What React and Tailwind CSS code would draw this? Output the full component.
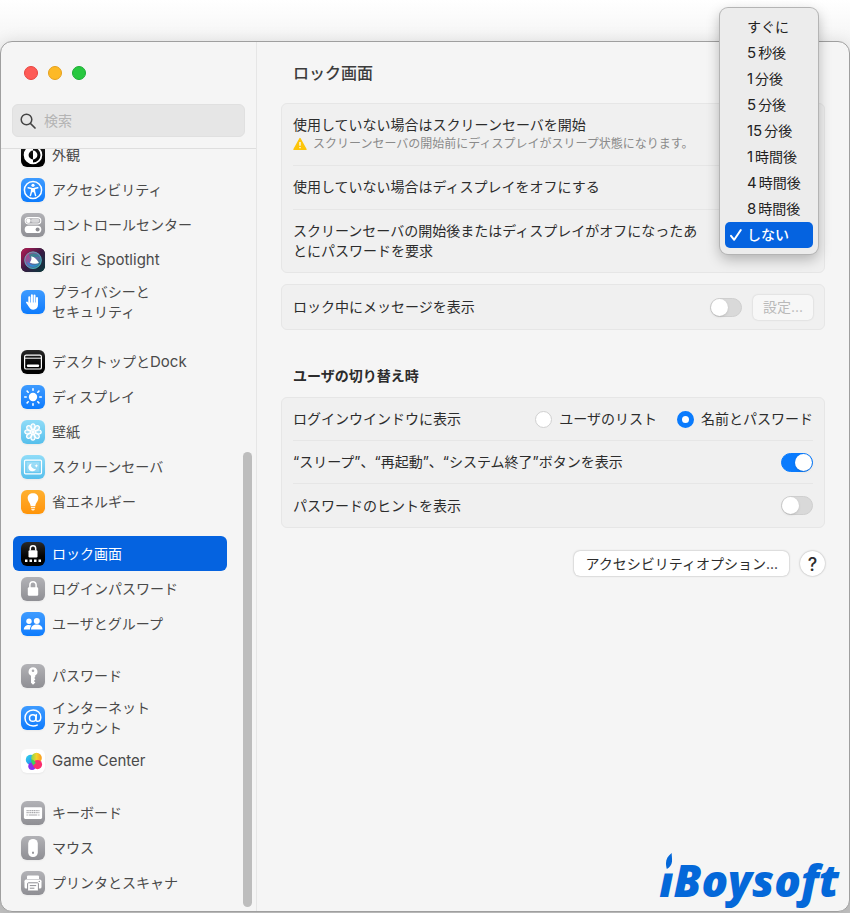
import React, { useState } from "react";

const BLUE = "bg-linear-to-b from-[#3d9bff] to-[#0a7bfd]";
const GRAY = "bg-linear-to-b from-[#b2b2b6] to-[#8f8f94]";
const BLACK = "bg-linear-to-b from-[#2a2a2a] to-[#000000]";
const CYAN = "bg-linear-to-b from-[#8fdcf8] to-[#55bfec]";

const spokes = [0, 45, 90, 135, 180, 225, 270, 315];

const icons = {
  appearance: (
    <>
      <circle cx="12" cy="12" r="8.4" fill="none" stroke="#fff" strokeWidth="1.8" />
      <path d="M12 3.6a8.4 8.4 0 0 0 0 16.8v-4a4.4 4.4 0 0 1 0-8.8z" fill="#fff" />
      <path d="M12 7.6a4.4 4.4 0 0 1 0 8.8z" fill="#fff" />
    </>
  ),
  accessibility: (
    <>
      <circle cx="12" cy="12" r="8.6" fill="none" stroke="#fff" strokeWidth="1.5" />
      <circle cx="12" cy="7.3" r="1.6" fill="#fff" />
      <path d="M7.2 9.8l3.4.7v2.7l-1.2 4.4M16.8 9.8l-3.4.7v2.7l1.2 4.4" fill="none" stroke="#fff" strokeWidth="1.5" strokeLinecap="round" strokeLinejoin="round" />
      <path d="M10.2 10h3.6v4.2h-3.6z" fill="#fff" />
    </>
  ),
  control: (
    <>
      <rect x="4.2" y="4.6" width="15.6" height="6.4" rx="3.2" fill="none" stroke="#fff" strokeWidth="1.1" />
      <rect x="10" y="5.8" width="8.4" height="4" rx="2" fill="#fff" opacity=".55" />
      <circle cx="7.4" cy="7.8" r="2.2" fill="#fff" />
      <rect x="3.7" y="12.8" width="16.6" height="7.2" rx="3.6" fill="#fff" />
      <circle cx="16.6" cy="16.4" r="2" fill="#8e8e93" />
    </>
  ),
  siri: (
    <>
      <defs>
        <linearGradient id="siri-bg" x1="0" y1="0" x2="1" y2="1">
          <stop offset="0" stopColor="#c01a55" />
          <stop offset=".5" stopColor="#3a1a44" />
          <stop offset="1" stopColor="#043c3c" />
        </linearGradient>
        <linearGradient id="siri-orb" x1="0" y1="0" x2="1" y2="1">
          <stop offset="0" stopColor="#f0377c" />
          <stop offset=".45" stopColor="#8a7fd0" />
          <stop offset="1" stopColor="#14b8b0" />
        </linearGradient>
      </defs>
      <rect width="24" height="24" fill="url(#siri-bg)" />
      <circle cx="12" cy="12.2" r="8.6" fill="url(#siri-orb)" opacity=".7" />
      <circle cx="12" cy="12.2" r="8.3" fill="none" stroke="#52c9c8" strokeWidth=".9" opacity=".8" />
      <path d="M8 6.500c4-2.500 8-1.500 10.500 2.500-4-1-6 0-6.500 3-2-1-3.500-3-4-5.500z" fill="#1f8f8c" opacity=".7" />
      <path d="M6 13.500c3 4 8 5 12 2-2 4-10 5.500-12-2z" fill="#2a8fe0" opacity=".85" />
      <path d="M10.200 8.200c4 1 6.300 4 7.800 6.800-3 1-6.500.8-9.300-.6 1.800-1.600 2-4 1.500-6.200z" fill="#fff" />
    </>
  ),
  privacy: (
    <g fill="none" stroke="#fff" strokeLinecap="round">
      <path d="M8.3 7.2v6M10.9 5.3v8M13.5 5.6v8M16 8v6" strokeWidth="2" />
      <path d="M6 12.5l2.6 3.5" strokeWidth="1.9" />
      <path d="M7.4 12.4H17v2.2c0 3.200-1.800 5.200-4.800 5.200-2.400 0-3.600-1.300-4.800-4z" fill="#fff" stroke="none" />
    </g>
  ),
  dock: (
    <>
      <rect x="3.6" y="5.2" width="16.8" height="13.8" rx="1.6" fill="none" stroke="#fff" strokeWidth="1.2" />
      <path d="M4 8.2h16" stroke="#fff" strokeWidth="1" />
      <path d="M7 15.8h10" stroke="#fff" strokeWidth="2.4" strokeLinecap="round" />
    </>
  ),
  display: (
    <>
      <circle cx="12" cy="12" r="4.2" fill="#fff" />
      {spokes.map((a) => (
        <path key={a} d="M12 3.7v1.5" transform={`rotate(${a} 12 12)`} stroke="#fff" strokeWidth="1.6" strokeLinecap="round" />
      ))}
    </>
  ),
  wallpaper: (
    <>
      {spokes.map((a) => (
        <ellipse key={a} cx="12" cy="6.7" rx="2.1" ry="2.9" transform={`rotate(${a} 12 12)`} fill="#fff" fillOpacity=".35" stroke="#fff" strokeWidth="1.3" />
      ))}
      <circle cx="12" cy="12" r="1.9" fill="#fff" />
    </>
  ),
  saver: (
    <>
      <rect x="3.5" y="5.2" width="17" height="13.6" rx="1" fill="none" stroke="#fff" strokeWidth="1.2" />
      <rect x="5.6" y="7.2" width="12.8" height="9.6" fill="#fff" opacity=".25" />
      <path d="M10.600 8.400a4 4 0 1 0 4.500 5.300 3.700 3.700 0 0 1-4.500-5.300z" fill="#fff" />
      <path d="M15.300 9l.6 1.300 1.300.5-1.300.6-.6 1.300-.5-1.300-1.300-.6 1.300-.5z" fill="#fff" />
    </>
  ),
  energy: (
    <>
      <path d="M12 3.300c-3.200 0-5.300 2-5.300 4.800 0 3.400 2.600 4.600 3 8.100h4.600c.4-3.500 3-4.700 3-8.100 0-2.800-2.100-4.800-5.300-4.800z" fill="#fff" />
      <path d="M9.900 17.100h4.200v1.100H9.900zM10.200 18.900h3.600c-.2 1-.9 1.600-1.800 1.600s-1.600-.6-1.800-1.600z" fill="#fff" opacity=".85" />
    </>
  ),
  lockscreen: (
    <>
      <path d="M9.300 8.600V6.400a2.700 2.700 0 0 1 5.400 0v2.200" fill="none" stroke="#fff" strokeWidth="1.500" />
      <rect x="7.500" y="8.300" width="9" height="7.200" rx="1.200" fill="#fff" />
      <path d="M4 17.500h2.500v2.500H4zM8.500 17.500H11v2.500H8.500zM13 17.500h2.500v2.500H13zM17.500 17.500H20v2.500h-2.500z" fill="#fff" />
    </>
  ),
  lock: (
    <>
      <path d="M8.900 11V7.800a3.100 3.100 0 0 1 6.200 0V11" fill="none" stroke="#fff" strokeWidth="1.500" />
      <rect x="6.800" y="10.300" width="10.400" height="8.400" rx="1.300" fill="#fff" />
    </>
  ),
  users: (
    <g fill="#fff">
      <circle cx="8" cy="9.300" r="2.700" />
      <circle cx="15.800" cy="9" r="3" />
      <path d="M2.800 17.600c0-3 2.200-4.700 5-4.700 1.100 0 2 .2 2.700.7-1 1-1.500 2.300-1.500 4z" />
      <path d="M10 17.600c0-3.200 2.400-5 5.700-5s5.800 1.800 5.800 5z" />
    </g>
  ),
  key: (
    <path
      fillRule="evenodd"
      d="M12 3.200a4.500 4.500 0 0 0-2 8.500v7.100l2 2 2.400-2.300-1.500-1.600 1.500-1.600-1.200-1.400 1-.9v-1.400A4.500 4.500 0 0 0 12 3.200zm0 2.300a1.300 1.300 0 1 1 0 2.600 1.300 1.300 0 0 1 0-2.600z"
      fill="#fff"
    />
  ),
  at: (
    <g fill="none" stroke="#fff" strokeWidth="1.500" strokeLinecap="round">
      <circle cx="11.800" cy="12" r="3.300" />
      <path d="M15.300 8.700l-.5 4.600c-.1 1.300.6 2 1.700 2 1.800 0 3.300-1.700 3.300-4.100 0-4.200-3.300-7.200-7.600-7.200-4.800 0-8.200 3.500-8.200 8.100 0 4.700 3.300 7.900 8.200 7.900 1.500 0 2.900-.3 4-.9" />
    </g>
  ),
  game: (
    <>
      <defs>
        <linearGradient id="gc-a" x1="0" y1="0" x2="1" y2="1">
          <stop offset="0" stopColor="#2fd8e8" />
          <stop offset=".6" stopColor="#2b9bf0" />
          <stop offset="1" stopColor="#6a4df0" />
        </linearGradient>
        <linearGradient id="gc-b" x1="0" y1="0" x2="1" y2="0">
          <stop offset="0" stopColor="#7ed957" />
          <stop offset=".5" stopColor="#f5d327" />
          <stop offset="1" stopColor="#fb9a1f" />
        </linearGradient>
      </defs>
      <circle cx="9.800" cy="10.800" r="5" fill="url(#gc-a)" />
      <circle cx="15.500" cy="9" r="5.300" fill="url(#gc-b)" />
      <circle cx="11" cy="17.200" r="3.700" fill="#8b2ff0" />
      <circle cx="16.500" cy="15.600" r="4.600" fill="#fb2d6d" />
      <path d="M10.200 10.500a5.300 5.300 0 0 1 4.600 3.700 4.700 4.700 0 0 0-2.300 2.600c-1.500-1.500-2.500-3.800-2.300-6.300z" fill="#3ecf5c" />
    </>
  ),
  keyboard: (
    <>
      <rect x="2.900" y="6.300" width="18.200" height="11.600" rx="1.400" fill="#fff" />
      <path d="M5.500 9.600h13M5.500 11.600h13" stroke="#a8a8ac" strokeWidth="1.200" strokeDasharray="1.300 .5" />
      <path d="M5.500 14h1.300M7.700 14h8.600M17.200 14h1.300" stroke="#a8a8ac" strokeWidth="1.200" />
    </>
  ),
  mouse: (
    <>
      <rect x="7.200" y="2.900" width="9.600" height="18.200" rx="4.600" fill="#fff" />
      <path d="M12 15.800v2" stroke="#8e8e93" strokeWidth="1.800" />
    </>
  ),
  printer: (
    <>
      <path d="M7 4.500h10a1 1 0 0 1 1 1V8H6V5.500a1 1 0 0 1 1-1z" fill="#fff" />
      <rect x="3.500" y="8.600" width="17" height="9" rx="1.600" fill="#fff" />
      <rect x="6.600" y="11.800" width="10.800" height="8.200" rx=".8" fill="#fff" stroke="#8e8e93" strokeWidth="1" />
      <path d="M8.800 14.600h6.400M8.800 17.200h4.600" stroke="#8e8e93" strokeWidth="1" />
      <circle cx="18.300" cy="10.400" r=".7" fill="#8e8e93" />
    </>
  ),
};

const sections = [
  [
    { icon: "appearance", tone: BLACK, label: "外観" },
    { icon: "accessibility", tone: BLUE, label: "アクセシビリティ" },
    { icon: "control", tone: GRAY, label: "コントロールセンター" },
    { icon: "siri", tone: BLACK, label: "Siri と Spotlight" },
    { icon: "privacy", tone: BLUE, label: "プライバシーと\nセキュリティ" },
  ],
  [
    { icon: "dock", tone: BLACK, label: "デスクトップとDock" },
    { icon: "display", tone: BLUE, label: "ディスプレイ" },
    { icon: "wallpaper", tone: CYAN, label: "壁紙" },
    { icon: "saver", tone: CYAN, label: "スクリーンセーバ" },
    { icon: "energy", tone: "bg-linear-to-b from-[#ffb02e] to-[#ff9406]", label: "省エネルギー" },
  ],
  [
    { icon: "lockscreen", tone: BLACK, label: "ロック画面" },
    { icon: "lock", tone: GRAY, label: "ログインパスワード" },
    { icon: "users", tone: BLUE, label: "ユーザとグループ" },
  ],
  [
    { icon: "key", tone: GRAY, label: "パスワード" },
    { icon: "at", tone: BLUE, label: "インターネット\nアカウント" },
    { icon: "game", tone: "bg-white", label: "Game Center" },
  ],
  [
    { icon: "keyboard", tone: GRAY, label: "キーボード" },
    { icon: "mouse", tone: GRAY, label: "マウス" },
    { icon: "printer", tone: GRAY, label: "プリンタとスキャナ" },
  ],
];

// Latin runs are set one step larger than the kana around them.
function MixedText({ text }) {
  return text.split(/([A-Za-z]+(?: [A-Za-z]+)*)/).map((part, i) =>
    i % 2 ? (
      <span key={i} className="text-[15px]">
        {part}
      </span>
    ) : (
      part
    ),
  );
}

function NavItem({ item, selected, onSelect }) {
  const tall = item.label.includes("\n");
  return (
    <li>
      <a
        href="#"
        onClick={(e) => {
          e.preventDefault();
          onSelect(item.label);
        }}
        aria-current={selected ? "page" : undefined}
        className={`flex items-center gap-[7px] rounded-md px-2 text-sm leading-5 whitespace-pre-line ${tall ? "h-[50px]" : "h-[35px]"} ${
          selected ? "bg-[#0563e0] text-white" : "text-[#4a4a4a]"
        }`}
      >
        <svg viewBox="0 0 24 24" aria-hidden="true" className={`size-6 shrink-0 rounded-md shadow-xs ${item.tone}`}>
          {icons[item.icon]}
        </svg>
        <span>
          <MixedText text={item.label} />
        </span>
      </a>
    </li>
  );
}

function Sidebar() {
  const [current, setCurrent] = useState("ロック画面");
  return (
    <aside className="flex w-64 shrink-0 flex-col border-r border-[#e6e6e6]">
      <div className="border-b border-[#dedede] px-[11px] pb-[11px]">
        <div className="flex h-[62px] items-center gap-2.5 px-3">
          <button aria-label="閉じる" className="size-3.5 rounded-full border border-[#e8443f] bg-[#fe5b56]" />
          <button aria-label="しまう" className="size-3.5 rounded-full border border-[#e5a01c] bg-[#fdb926]" />
          <button aria-label="拡大" className="size-3.5 rounded-full border border-[#1cac35] bg-[#28c840]" />
        </div>
        <div className="flex h-[33px] items-center gap-2 rounded-md border border-[#e0e0e0] bg-[#e6e6e6] px-[7px]">
          <svg viewBox="0 0 16 16" aria-hidden="true" className="size-4 shrink-0">
            <circle cx="6.500" cy="6.500" r="5.300" fill="none" stroke="#444" strokeWidth="1.500" />
            <path d="M10.500 10.500l4.500 4.500" stroke="#444" strokeWidth="1.700" strokeLinecap="round" />
          </svg>
          <input
            type="search"
            aria-label="検索"
            placeholder="検索"
            className="min-w-0 flex-1 bg-transparent text-sm outline-none placeholder:text-[#b4b4b4]"
          />
        </div>
      </div>
      <div className="flex flex-1 overflow-hidden">
        <nav aria-label="設定項目" className="-mt-3 flex flex-1 flex-col gap-[17px] pr-4 pb-2 pl-3">
          {sections.map((items, i) => (
            <ul key={i}>
              {items.map((item) => (
                <NavItem key={item.label} item={item} selected={item.label === current} onSelect={setCurrent} />
              ))}
            </ul>
          ))}
        </nav>
        <div className="flex w-[13px] flex-col justify-end pr-1 pb-1">
          <div className="h-3/5 rounded-full bg-[#bdbdbd]" />
        </div>
      </div>
    </aside>
  );
}

function Card({ children }) {
  return (
    <div className="divide-y divide-[#e6e6e6] rounded-md border border-[#e6e6e6] bg-[#f0f0f0] px-[11px]">{children}</div>
  );
}

function Switch({ id, on, ...rest }) {
  return (
    <input
      id={id}
      type="checkbox"
      role="switch"
      defaultChecked={on}
      className="h-[19px] w-8 shrink-0 appearance-none rounded-full border border-[#cfcfcf] bg-[#d9d9d9] before:block before:size-[17px] before:rounded-full before:bg-white before:shadow-sm checked:border-[#0a7bfd] checked:bg-[#0a7bfd] checked:before:ml-[13px]"
      {...rest}
    />
  );
}

function Radio({ label, on }) {
  return (
    <label className="flex items-center gap-[7px]">
      <input
        type="radio"
        name="login-window"
        defaultChecked={on}
        className="size-[17px] appearance-none rounded-full border border-[#d0d0d0] bg-white checked:border-[5px] checked:border-[#0a7bfd]"
      />
      {label}
    </label>
  );
}

const delays = ["すぐに", "5秒後", "1分後", "5分後", "15分後", "1時間後", "4時間後", "8時間後", "しない"];

function DelayMenu() {
  const [value, setValue] = useState("しない");
  return (
    <div className="relative h-7 w-[100px] shrink-0">
      <div
        role="listbox"
        aria-labelledby="delay-label"
        className="absolute -right-[5px] -bottom-[5px] z-10 flex w-[98px] flex-col rounded-lg bg-[#ececec] px-[5px] py-1.5 shadow-[0_5px_14px_rgba(0,0,0,0.28)] ring-1 ring-[#b4b4b4]"
      >
        {delays.map((d) => {
          const digits = d.match(/^\d*/)[0];
          const active = d === value;
          return (
            <button
              key={d}
              role="option"
              aria-selected={active}
              onClick={() => setValue(d)}
              className={`flex h-[26px] items-center rounded-[5px] pl-1 whitespace-nowrap ${
                active ? "bg-[#0563e0] font-medium text-white" : "text-[#222]"
              }`}
            >
              <svg viewBox="0 0 14 14" aria-hidden="true" className="mr-1 size-3.5">
                {active && <path d="M2 7.800l3.200 4L11.800 2" fill="none" stroke="#fff" strokeWidth="2" strokeLinecap="round" strokeLinejoin="round" />}
              </svg>
              <span>
                {digits && <span className="mr-0.5 text-[15px]">{digits}</span>}
                {d.slice(digits.length)}
              </span>
            </button>
          );
        })}
      </div>
    </div>
  );
}

function Content() {
  return (
    <main className="flex min-w-0 flex-1 flex-col px-6 text-sm leading-5 text-[#2c2c2c]">
      <h1 className="flex h-[61px] items-center px-3 text-base font-medium text-[#3c3c3c]">ロック画面</h1>

      <Card>
        <div className="pt-[11px] pb-3">
          <p>使用していない場合はスクリーンセーバを開始</p>
          <p className="flex items-center gap-1.5 text-xs leading-[18px] text-[#8a8a8a]">
            <svg viewBox="0 0 14 14" aria-hidden="true" className="size-3.5">
              <path d="M7 1.600L13 12.400H1z" fill="#fdc50a" stroke="#fdc50a" strokeWidth="1.400" strokeLinejoin="round" />
              <path d="M7 5v3.800M7 10v1.300" stroke="#fff" strokeWidth="1.300" />
            </svg>
            スクリーンセーバの開始前にディスプレイがスリープ状態になります。
          </p>
        </div>
        <p className="pt-[11px] pb-3">使用していない場合はディスプレイをオフにする</p>
        <div className="flex items-start gap-2 py-[11px]">
          <p id="delay-label" className="min-w-0 flex-1">
            スクリーンセーバの開始後またはディスプレイがオフになったあとにパスワードを要求
          </p>
          <DelayMenu />
        </div>
      </Card>

      <div className="mt-[11px]">
        <Card>
          <div className="flex h-11 items-center gap-[11px]">
            <label htmlFor="message" className="flex-1">
              ロック中にメッセージを表示
            </label>
            <Switch id="message" />
            <button disabled className="h-[25px] rounded-[5px] bg-[#f7f7f7] px-2.5 text-[#b9b9b9] shadow-[0_0_2px_rgba(0,0,0,0.18)]">
              設定...
            </button>
          </div>
        </Card>
      </div>

      <h2 className="mt-9 mb-[11px] px-3 font-bold">ユーザの切り替え時</h2>

      <Card>
        <div role="radiogroup" aria-labelledby="login-label" className="flex h-[43px] items-center gap-5">
          <span id="login-label" className="flex-1">
            ログインウインドウに表示
          </span>
          <Radio label="ユーザのリスト" />
          <Radio label="名前とパスワード" on />
        </div>
        <div className="flex h-[43px] items-center">
          <label htmlFor="buttons" className="flex-1">
            “スリープ”、“再起動”、“システム終了”ボタンを表示
          </label>
          <Switch id="buttons" on />
        </div>
        <div className="flex h-[43px] items-center">
          <label htmlFor="hint" className="flex-1">
            パスワードのヒントを表示
          </label>
          <Switch id="hint" />
        </div>
      </Card>

      <div className="mt-[23px] flex items-center justify-end gap-[11px]">
        <button className="h-[25px] rounded-md bg-white px-[11px] shadow-[0_0_2px_rgba(0,0,0,0.35)]">アクセシビリティオプション...</button>
        <button aria-label="ヘルプ" className="size-[25px] rounded-full bg-white text-lg font-medium shadow-[0_0_2px_rgba(0,0,0,0.35)]">
          ?
        </button>
      </div>

      <div className="relative mt-auto -mr-3.5 mb-1 self-end font-['Open_Sans',sans-serif] text-[44px] leading-[54px] font-extrabold text-[#0468d9] italic">
        <svg viewBox="0 0 8 18" aria-hidden="true" className="absolute top-0 left-1.5 h-4 w-2">
          <path d="M7 0C3 3 .6 7 .6 11.500c0 2.500.4 4.500 1 6.500 3-1.500 5.400-4.500 5.800-8.500C7.700 6 7 3 7 0z" fill="#0468d9" />
        </svg>
        <span className="inline-block [clip-path:inset(38%_0_0_0)]">i</span>Boysoft
      </div>
    </main>
  );
}

export default function App() {
  return (
    <div className="flex min-h-screen flex-col bg-linear-to-b from-white via-[#f4f4f4] via-5% to-[#c0c0c0] pt-[41px] pb-px font-[Inter,'Noto_Sans_CJK_JP',sans-serif]">
      <div className="flex flex-1 rounded-xl border border-[#9f9f9f] bg-[#f5f5f5] shadow-[0_0_16px_rgba(0,0,0,0.10)]">
        <Sidebar />
        <Content />
      </div>
    </div>
  );
}
